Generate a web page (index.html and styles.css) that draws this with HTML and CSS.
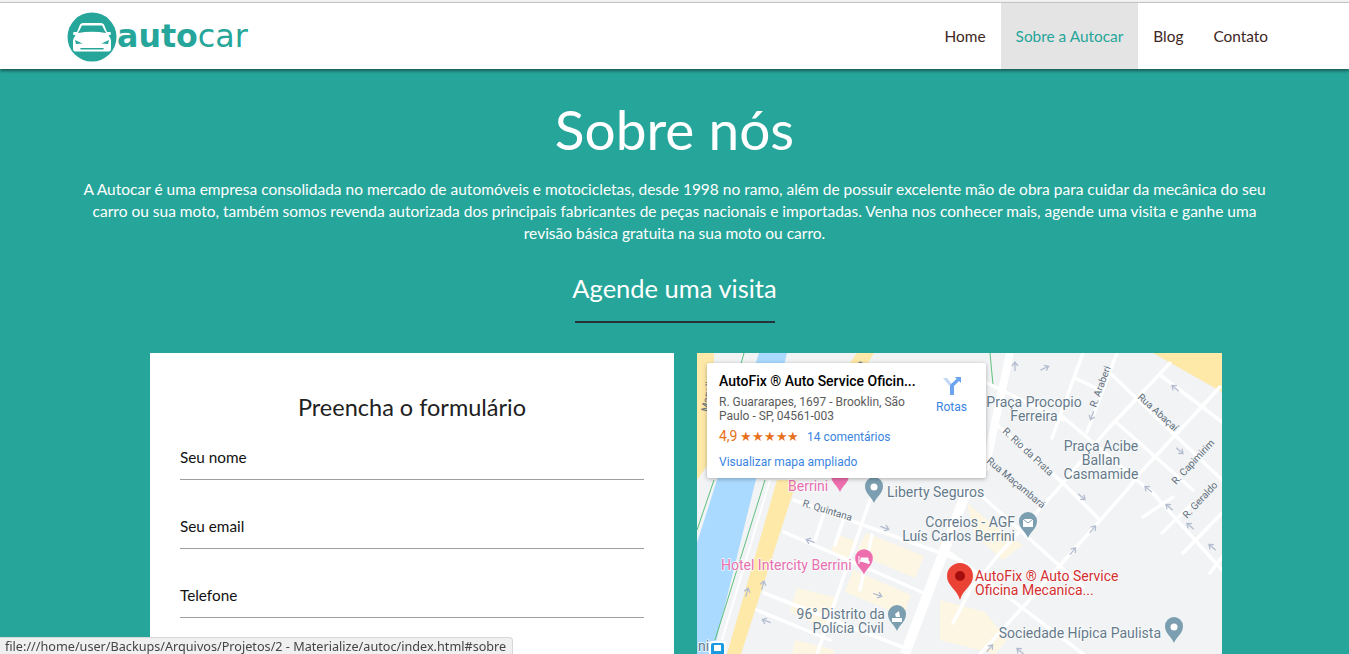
FILE: index.html
```html
<!DOCTYPE html>
<html lang="pt-br">
<head>
    <meta charset="UTF-8">
    <meta name="viewport" content="width=device-width, initial-scale=1.0">
    <title>Autocar - Sobre</title>
    <link rel="stylesheet" href="styles.css">
</head>
<body>
    <div class="barra-janela"></div>
    <header class="topo">
        <a class="logo" href="#">
            <svg class="logo-icone" viewBox="0 0 50 50" width="50" height="50">
                <circle cx="25" cy="25" r="24.5" fill="#26a69a"/>
                <path fill="#fff" d="M13 12.500 Q14 11 16 11 L34 11 Q36 11 37 12.500 L40 20 L43.500 20 L44 22.500 L41.500 23.500 Q44 26 44 29 L44 37 Q44 39 42 39.500 L8 39.500 Q6 39 6 37 L6 29 Q6 26 8.500 23.500 L6 22.500 L6.500 20 L10 20 Z"/>
                <path fill="#26a69a" d="M15 13.500 L35 13.500 L39 21 Q25 18.500 11 21 Z"/>
                <path fill="#26a69a" d="M8 28 L15.500 31.500 L9 32 Z M42 28 L34.500 31.500 L41 32 Z M13 36 L37 36 L36 37.500 L14 37.500 Z"/>
            </svg>
            <span class="logo-texto"><b>auto</b>car</span>
        </a>
        <nav>
            <ul class="menu">
                <li><a href="#">Home</a></li>
                <li class="ativo"><a href="#sobre">Sobre a Autocar</a></li>
                <li><a href="#">Blog</a></li>
                <li><a href="#">Contato</a></li>
            </ul>
        </nav>
    </header>

    <main class="sobre" id="sobre">
        <h1>Sobre nós</h1>
        <p class="intro">A Autocar é uma empresa consolidada no mercado de automóveis e motocicletas, desde 1998 no ramo, além de possuir excelente mão de obra para cuidar da mecânica do seu<br>carro ou sua moto, também somos revenda autorizada dos principais fabricantes de peças nacionais e importadas. Venha nos conhecer mais, agende uma visita e ganhe uma<br>revisão básica gratuita na sua moto ou carro.</p>
        <h2>Agende uma visita</h2>
        <div class="divisor"></div>

        <div class="colunas">
            <form class="formulario">
                <h3>Preencha o formulário</h3>
                <label class="campo">Seu nome</label>
                <label class="campo">Seu email</label>
                <label class="campo">Telefone</label>
            </form>

            <div class="mapa">
                <svg class="mapa-svg" viewBox="697 353 525 301" width="525" height="301">
                    <defs>
                        <path id="seta" d="M-5 0 L3 0 M0 -3 L4 0 L0 3" fill="none" stroke="#b4bdd0" stroke-width="1.300"/>
                        <path id="pino" d="M0 14 C-2 8 -9 5 -9 -3 A9 9 0 1 1 9 -3 C9 5 2 8 0 14 Z"/>
                    </defs>
                    <rect x="697" y="353" width="525" height="301" fill="#f1f3f4"/>

                    <!-- quarteiroes claros -->
                    <g fill="#fdf6e3">
                        <path d="M838 535 L858 542 L850 560 L830 552 Z"/>
                        <path d="M866 533 L924 556 L915 578 L856 553 Z"/>
                        <path d="M853 570 L911 595 L903 616 L845 592 Z"/>
                        <path d="M797 588 L838 598 L828 630 L790 612 Z"/>
                        <path d="M795 640 L835 650 L833 654 L792 654 Z"/>
                        <path d="M967 503 L1000 530 L1023 545 L1003 560 L975 535 Z"/>
                        <path d="M940 600 L985 612 L1007 640 L995 654 L940 640 Z"/>
                    </g>

                    <!-- rio e marginal -->
                    <path d="M759 353 L787 353 L713 654 L697 654 L697 543 L717 480 Z" fill="#aadaff"/>
                    <path d="M777 480 L797 480 L741 654 L727 654 Z M697 353 L714 353 L714 456 L697 480 Z M857 353 L874 353 L866 366 L848 366 Z M1153 353 L1222 353 L1222 392 Z" fill="#fee9a8"/>
                    <path d="M765 480 L715 640 M714 480 L697 530 M744 353 L738 375 M990 353 L993 385" fill="none" stroke="#5fbf7f" stroke-width="1"/>
                    <path d="M770 480 L722 640 M776 460 L790 400" fill="none" stroke="#fff" stroke-width="2"/>

                    <!-- ruas -->
                    <g fill="none" stroke="#fff" stroke-width="3.500" stroke-linecap="round">
                        <path d="M1083 353 L1052 438"/>
                        <path d="M1117 353 L1087 432"/>
                        <path d="M1075 378 L1100 390"/>
                        <path d="M1110 373 L1177 437 L1222 480"/>
                        <path d="M1170 363 L1107 430 L1057 490 L1000 553 L970 590 L953 623"/>
                        <path d="M1160 375 L1222 422"/>
                        <path d="M1220 387 L1140 473 L1127 490 L1023 607 L980 654"/>
                        <path d="M1117 423 L1193 490"/>
                        <path d="M1063 417 L1157 497"/>
                        <path d="M987 383 L1063 420"/>
                        <path d="M995 423 L1063 483 L1100 520"/>
                        <path d="M983 497 L1083 587"/>
                        <path d="M950 553 L1083 654"/>
                        <path d="M1150 490 L1222 570"/>
                        <path d="M1143 517 L1173 497"/>
                        <path d="M1162 533 L1193 503"/>
                        <path d="M1183 553 L1222 513"/>
                        <path d="M1210 573 L1222 557"/>
                        <path d="M870 500 L817 654"/>
                        <path d="M784 532 L924 593"/>
                        <path d="M794 500 L960 560"/>
                        <path d="M764 593 L910 650"/>
                        <path d="M757 610 L830 640"/>
                        <path d="M825 510 L815 540"/>
                        <path d="M845 515 L835 545"/>
                        <path d="M872 535 L860 590"/>
                    </g>
                    <path d="M967 490 L905 654" fill="none" stroke="#fff" stroke-width="10"/>
                    <path d="M1010 353 L985 470" fill="none" stroke="#fff" stroke-width="8"/>

                    <!-- setas de sentido -->
                    <g>
                        <use href="#seta" transform="translate(1015 366) rotate(-90)"/>
                        <use href="#seta" transform="translate(1045 368) rotate(-25)"/>
                        <use href="#seta" transform="translate(1092 416) rotate(110)"/>
                        <use href="#seta" transform="translate(1175 388) rotate(220)"/>
                        <use href="#seta" transform="translate(1180 451) rotate(40)"/>
                        <use href="#seta" transform="translate(1148 489) rotate(220)"/>
                        <use href="#seta" transform="translate(1082 497) rotate(40)"/>
                        <use href="#seta" transform="translate(1093 529) rotate(-50)"/>
                        <use href="#seta" transform="translate(1073 551) rotate(-50)"/>
                        <use href="#seta" transform="translate(1169 507) rotate(220)"/>
                        <use href="#seta" transform="translate(1190 526) rotate(220)"/>
                        <use href="#seta" transform="translate(1212 547) rotate(220)"/>
                        <use href="#seta" transform="translate(885 528) rotate(20)"/>
                        <use href="#seta" transform="translate(810 541) rotate(200)"/>
                        <use href="#seta" transform="translate(878 595) rotate(20)"/>
                        <use href="#seta" transform="translate(766 621) rotate(200)"/>
                        <use href="#seta" transform="translate(747 592) rotate(-75)"/>
                        <use href="#seta" transform="translate(763 585) rotate(-75)"/>
                        <use href="#seta" transform="translate(990 648) rotate(-50)"/>
                        <use href="#seta" transform="translate(1020 651) rotate(220)"/>
                    </g>

                    <!-- nomes de ruas -->
                    <g class="rua">
                        <text transform="translate(802 506) rotate(17)">R. Quintana</text>
                        <text transform="translate(1096 408) rotate(-70)">R. Araberi</text>
                        <text transform="translate(1137 398) rotate(42)">Rua Abaçaí</text>
                        <text transform="translate(1002 432) rotate(43)">R. Rio da Prata</text>
                        <text transform="translate(986 462) rotate(40)">Rua Maçambará</text>
                        <text transform="translate(1176 485) rotate(-47)">R. Capimirim</text>
                        <text transform="translate(1187 519) rotate(-47)">R. Geraldo</text>
                        <text transform="translate(708 412) rotate(-80)">Magalhães</text>
                        <text transform="translate(858 374) rotate(-60)">Na</text>
                    </g>

                    <!-- lugares -->
                    <g class="lugar">
                        <text x="1034" y="407" text-anchor="middle">Praça Procopio</text>
                        <text x="1034" y="421" text-anchor="middle">Ferreira</text>
                        <text x="1101" y="451" text-anchor="middle">Praça Acibe</text>
                        <text x="1101" y="465" text-anchor="middle">Ballan</text>
                        <text x="1101" y="479" text-anchor="middle">Casmamide</text>
                        <text x="887" y="497">Liberty Seguros</text>
                        <text x="1015" y="527" text-anchor="end">Correios - AGF</text>
                        <text x="1015" y="541" text-anchor="end">Luís Carlos Berrini</text>
                        <text x="885" y="619" text-anchor="end">96° Distrito da</text>
                        <text x="884" y="633" text-anchor="end">Polícia Civil</text>
                        <text x="1161" y="638" text-anchor="end">Sociedade Hípica Paulista</text>
                    </g>
                    <g class="lugar rosa">
                        <text x="788" y="491">Berrini</text>
                        <text x="721" y="570">Hotel Intercity Berrini</text>
                    </g>
                    <g class="lugar vermelho">
                        <text x="975" y="581">AutoFix ® Auto Service</text>
                        <text x="975" y="595">Oficina Mecanica...</text>
                    </g>
                    <text class="lugar" x="698" y="651">ni</text>

                    <!-- marcadores -->
                    <use href="#pino" transform="translate(840 478)" fill="#ee6fae"/>
                    <use href="#pino" transform="translate(874 489)" fill="#7b9eb0"/>
                    <circle cx="874" cy="487" r="3.500" fill="#fff"/>
                    <use href="#pino" transform="translate(864 561) scale(.98)" fill="#ee6fae"/>
                    <path d="M859 556 L859 564 M859 561 L869 561 L869 564 M861 558 L868 558 L868 561 L861 561 Z" fill="#fff" stroke="#fff" stroke-width="1"/>
                    <use href="#pino" transform="translate(1028 524)" fill="#7b9eb0"/>
                    <rect x="1023" y="519" width="10" height="8" fill="#fff"/>
                    <path d="M1023 519 L1028 523 L1033 519" fill="none" stroke="#7b9eb0" stroke-width="1"/>
                    <use href="#pino" transform="translate(897 617)" fill="#7b9eb0"/>
                    <path d="M892 618 L902 618 L902 622 L892 622 Z M895 614 L899 611 L900 617 L896 617 Z" fill="#fff"/>
                    <use href="#pino" transform="translate(1174 629)" fill="#7b9eb0"/>
                    <circle cx="1174" cy="627" r="3.500" fill="#fff"/>
                    <path d="M960 600 C957 589 947 586 947 576 A13 13 0 1 1 973 576 C973 586 963 589 960 600 Z" fill="#ea4335"/>
                    <circle cx="960" cy="576" r="5" fill="#a50e0e"/>
                    <rect x="709" y="641" width="17" height="15" rx="3" fill="#fff"/>
                    <rect x="711" y="643" width="13" height="13" rx="2" fill="#1a9be0"/>
                    <path d="M714 645 L721 645 L721 651 L714 651 Z" fill="#fff"/>
                </svg>

                <div class="mapa-card">
                    <div class="mapa-info">
                        <strong class="mapa-titulo">AutoFix ® Auto Service Oficin...</strong>
                        <p class="mapa-endereco">R. Guararapes, 1697 - Brooklin, São Paulo - SP, 04561-003</p>
                        <p class="mapa-nota"><span class="nota">4,9</span> <span class="estrelas">★★★★★</span> <a href="#">14 comentários</a></p>
                        <a class="mapa-ampliado" href="#">Visualizar mapa ampliado</a>
                    </div>
                    <a class="rotas" href="#">
                        <svg viewBox="0 0 20 20" width="20" height="20">
                            <path d="M1 2 L5 2 L10 8 L10 10 L7.500 10 Z" fill="#c4d9f7"/>
                            <path d="M13 1 L19 1 L19 7 L17 5 L12 10 L12 19 L8 19 L8 9 L14.500 3 Z" fill="#6ca4ee"/>
                        </svg>
                        Rotas
                    </a>
                </div>
            </div>
        </div>
    </main>

    <div class="status">file:///home/user/Backups/Arquivos/Projetos/2 - Materialize/autoc/index.html#sobre</div>
</body>
</html>
```

FILE: styles.css
```css
* {
    box-sizing: border-box;
}

html, body {
    height: 100%;
    overflow: hidden;
}

body {
    font-family: Lato, Arial, sans-serif;
    background-color: #26a69a;
    margin: 0;
    padding: 0;
    color: #fff;
}

a {
    text-decoration: none;
}

.barra-janela {
    height: 2px;
    background-color: #f4f4f4;
}

.topo {
    display: flex;
    justify-content: space-between;
    align-items: stretch;
    height: 67px;
    padding: 0 66px 0 67px;
    background-color: #fff;
    border-top: 1px solid #c4c4c4;
    box-shadow: 0 2px 3px rgba(0, 0, 0, 0.45);
    position: relative;
}

.logo {
    display: flex;
    align-items: center;
    color: #26a69a;
    margin-top: 2px;
}

.logo-texto {
    font-family: "DejaVu Sans", sans-serif;
    font-size: 31.7px;
    line-height: 1;
}

.menu {
    display: flex;
    height: 100%;
    margin: 0;
    padding: 0;
    list-style: none;
}

.menu a {
    display: flex;
    align-items: center;
    height: 100%;
    padding: 0 15px;
    color: #3e2723;
    font-size: 15.4px;
}

.menu .ativo {
    background-color: #e4e4e4;
}

.menu .ativo a {
    color: #26a69a;
}

.sobre {
    padding-top: 27px;
    text-align: center;
}

h1 {
    margin: 0;
    font-size: 55px;
    font-weight: 400;
    line-height: 66px;
}

.intro {
    margin: 16px 0 0;
    font-size: 15.5px;
    line-height: 22px;
}

h2 {
    margin: 28px 0 0;
    font-size: 25.5px;
    font-weight: 400;
    line-height: 32px;
}

.divisor {
    width: 200px;
    height: 2px;
    margin: 17px auto 0;
    background-color: #263238;
}

.colunas {
    display: grid;
    grid-template-columns: 524px 525px;
    gap: 23px;
    margin-top: 30px;
    padding-left: 150px;
}

.formulario {
    height: 400px;
    padding: 38px 30px 0;
    background-color: #fff;
    color: #212121;
}

h3 {
    margin: 0 0 11px;
    font-size: 23.5px;
    font-weight: 400;
    line-height: 32px;
}

.campo {
    display: block;
    height: 46px;
    margin-bottom: 23px;
    padding-top: 12px;
    border-bottom: 1px solid #9e9e9e;
    color: #111;
    font-size: 15.3px;
    line-height: 22px;
    text-align: left;
}

.mapa {
    position: relative;
    height: 400px;
    background-color: #f1f3f4;
}

.mapa-svg {
    display: block;
}

.rua text {
    font-family: Roboto, sans-serif;
    font-size: 10px;
    fill: #5f6f7d;
}

.lugar,
.lugar text {
    font-family: Roboto, sans-serif;
    font-size: 14px;
    fill: #64798a;
    stroke: rgba(255, 255, 255, 0.85);
    stroke-width: 1.5px;
    paint-order: stroke;
}

.rosa text {
    fill: #e66fb0;
}

.vermelho text {
    fill: #d32f2f;
}

/* cartao do google maps */
.mapa-card {
    position: absolute;
    top: 10px;
    left: 10px;
    display: flex;
    justify-content: space-between;
    width: 279px;
    height: 115px;
    padding: 10px 12px;
    background-color: #fff;
    border-radius: 2px;
    box-shadow: 0 1px 4px rgba(0, 0, 0, 0.3);
    color: #5b5b5b;
    font-family: Roboto, Arial, sans-serif;
    font-size: 12px;
    line-height: 14px;
    text-align: left;
}

.mapa-info {
    width: 200px;
}

.mapa-titulo {
    display: block;
    color: #000;
    font-size: 14px;
    font-weight: 500;
    line-height: 17px;
    white-space: nowrap;
}

.mapa-endereco {
    margin: 5px 0 0;
}

.mapa-nota {
    margin: 5px 0 0;
    white-space: nowrap;
    line-height: 16px;
}

.mapa-nota a,
.mapa-ampliado,
.rotas {
    color: #3a84df;
}

.mapa-nota a {
    margin-left: 5px;
}

.nota {
    color: #e7711b;
    font-size: 14px;
}

.estrelas {
    color: #e7711b;
    font-size: 13px;
    letter-spacing: -0.3px;
}

.mapa-ampliado {
    display: block;
    margin-top: 10px;
}

.rotas {
    display: flex;
    flex-direction: column;
    align-items: center;
    gap: 4px;
    margin: 3px 7px 0 0;
}

.status {
    position: fixed;
    left: 0;
    bottom: 0;
    width: 513px;
    height: 17px;
    padding: 0 5px;
    background-color: #f0f0f0;
    border: 1px solid #d8d8d8;
    border-left: none;
    border-bottom: none;
    border-top-right-radius: 4px;
    color: #444;
    font-family: "Noto Sans", sans-serif;
    font-size: 12.65px;
    line-height: 17px;
    white-space: nowrap;
}
```
